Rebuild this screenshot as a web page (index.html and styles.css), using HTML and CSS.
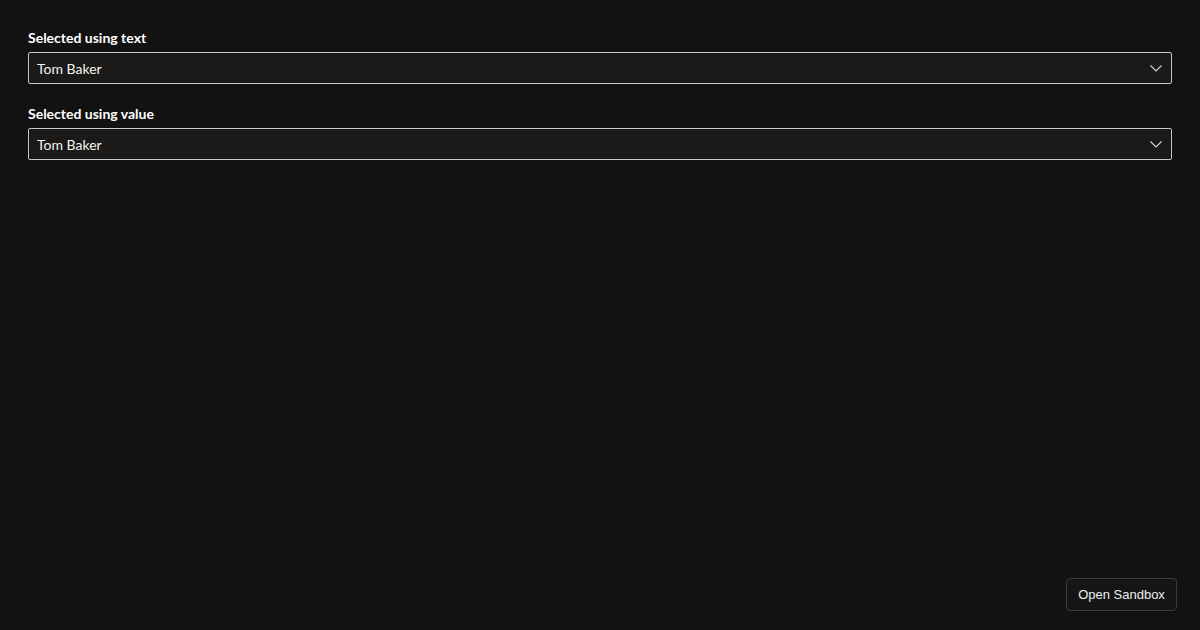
FILE: index.html
```html
<!DOCTYPE html>
<html>
<head>
<meta charset="utf-8">
<link rel="stylesheet" href="styles.css">
</head>
<body>
<div class="page">
  <div class="field">
    <label class="label">Selected using text</label>
    <div class="select">
      <span class="value">Tom Baker</span>
      <svg class="chevron" width="12" height="8" viewBox="0 0 12 8"><path d="M0.5 1.5 L6 7 L11.5 1.5" fill="none" stroke="#d6d6d6" stroke-width="1.1"/></svg>
    </div>
  </div>
  <div class="field">
    <label class="label">Selected using value</label>
    <div class="select">
      <span class="value">Tom Baker</span>
      <svg class="chevron" width="12" height="8" viewBox="0 0 12 8"><path d="M0.5 1.5 L6 7 L11.5 1.5" fill="none" stroke="#d6d6d6" stroke-width="1.1"/></svg>
    </div>
  </div>
</div>
<button class="sandbox">Open Sandbox</button>
</body>
</html>
```
FILE: styles.css
```css
html, body {
  margin: 0;
  padding: 0;
  background: #121212;
  height: 100%;
}
body {
  font-family: "Lato", "Open Sans", sans-serif;
  color: #ffffff;
}
.page {
  padding: 28px 28px 0 28px;
  display: flex;
  flex-direction: column;
  gap: 20px;
}
.field {
  display: flex;
  flex-direction: column;
  gap: 4px;
}
.label {
  font-size: 14px;
  font-weight: 700;
  line-height: 20px;
  color: #ffffff;
}
.select {
  height: 32px;
  box-sizing: border-box;
  border: 1px solid #c8c8c8;
  border-radius: 2px;
  background: #1b1a19;
  display: flex;
  align-items: center;
  justify-content: space-between;
  padding: 0 9px 0 8px;
}
.value {
  font-size: 14px;
  color: #f3f2f1;
}
.chevron {
  display: block;
}
.sandbox {
  position: fixed;
  right: 23px;
  bottom: 19px;
  width: 111px;
  height: 33px;
  background: #151515;
  border: 1px solid #3a3a3a;
  border-radius: 4px;
  color: #eeeeee;
  font-family: "Liberation Sans", Arial, sans-serif;
  font-size: 13px;
  padding: 0;
}
```
